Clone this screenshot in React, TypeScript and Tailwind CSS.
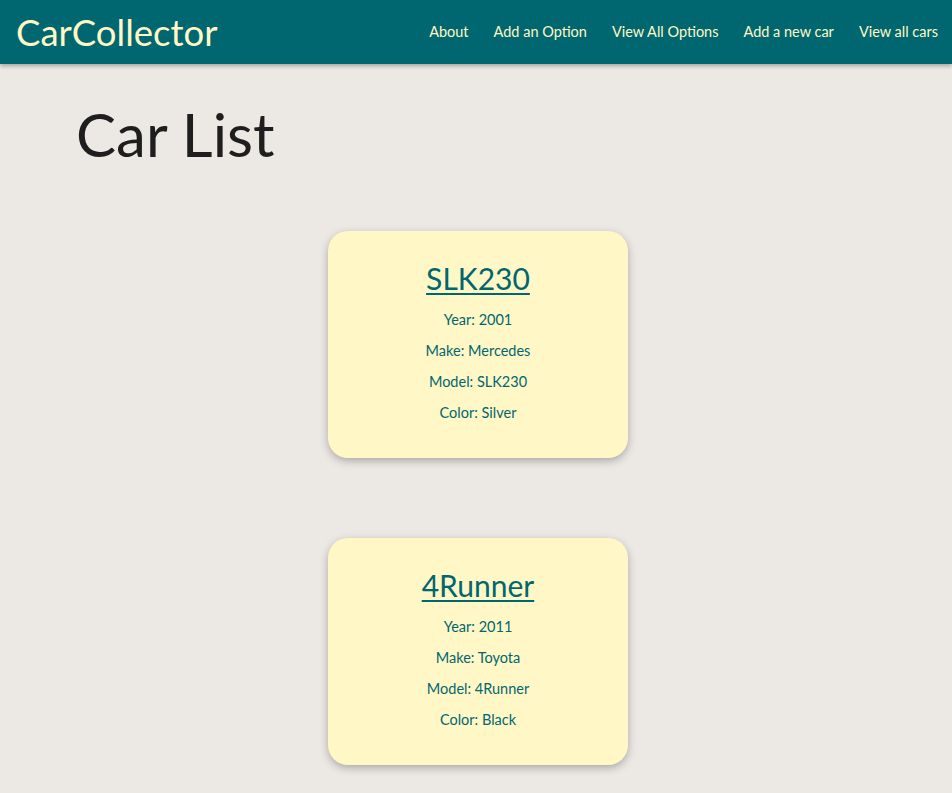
const cars = [
  { name: 'SLK230', year: 2001, make: 'Mercedes', model: 'SLK230', color: 'Silver' },
  { name: '4Runner', year: 2011, make: 'Toyota', model: '4Runner', color: 'Black' },
];

const links = ['About', 'Add an Option', 'View All Options', 'Add a new car', 'View all cars'];

function CarCard({ car }: { car: (typeof cars)[number] }) {
  return (
    <div className="w-[300px] rounded-[20px] bg-[#fff8c6] pt-[29px] pb-[30px] flex flex-col items-center text-[#00666f] shadow-[0_3px_8px_rgba(0,0,0,0.28)]">
      <a href="#" className="text-[30px] leading-[36px] underline underline-offset-[3px] decoration-[2px]">
        {car.name}
      </a>
      <div className="mt-[8px] flex flex-col items-center text-[14.5px] leading-[31px]">
        <p>Year: {car.year}</p>
        <p>Make: {car.make}</p>
        <p>Model: {car.model}</p>
        <p>Color: {car.color}</p>
      </div>
    </div>
  );
}

export default function App() {
  return (
    <div className="min-h-[793px] bg-[#ece9e5] font-['Lato',sans-serif]">
      <nav className="h-16 bg-[#006670] flex items-center justify-between pl-4 pr-[14px] shadow-[0_2px_4px_rgba(0,0,0,0.3)]">
        <a href="#" className="text-[36.5px] text-[#fff8c6] leading-none">CarCollector</a>
        <ul className="flex items-center gap-[25px] text-[14.5px] text-[#fff8c6]">
          {links.map((l) => (
            <li key={l}><a href="#">{l}</a></li>
          ))}
        </ul>
      </nav>

      <main className="px-[76px]">
        <h1 className="pt-[30px] text-[60px] leading-[80px] text-[#1e1e1e]">Car List</h1>
        <div className="mt-[57px] pb-[28px] flex flex-col items-center gap-[80px] pl-[4px]">
          {cars.map((c) => (
            <CarCard key={c.name} car={c} />
          ))}
        </div>
      </main>
    </div>
  );
}
